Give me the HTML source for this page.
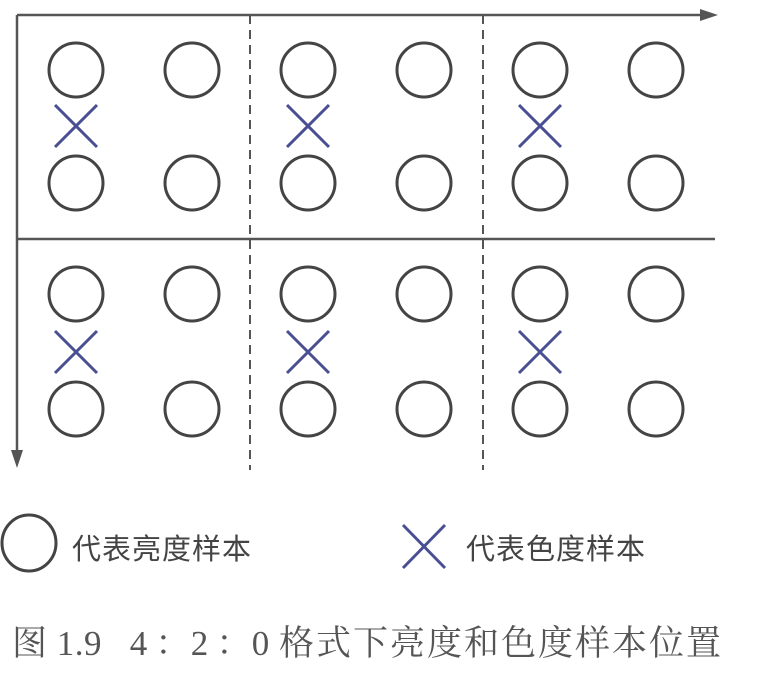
<!DOCTYPE html>
<html><head><meta charset="utf-8"><style>
html,body{margin:0;padding:0;background:#fff;}
body{width:768px;height:673px;overflow:hidden;position:relative;}
.t{position:absolute;font-family:"Liberation Serif","Noto Serif CJK SC",serif;color:#444;white-space:nowrap;}
</style></head><body>
<svg width="768" height="673" style="position:absolute;left:0;top:0">
<g stroke="#555" stroke-width="2.5" fill="none">
<line x1="17" y1="15" x2="705" y2="15"/>
<line x1="17" y1="15" x2="17" y2="455"/>
<line x1="17" y1="239" x2="715" y2="239"/>
<line x1="250" y1="15" x2="250" y2="470" stroke-dasharray="9,6" stroke-width="2"/>
<line x1="483" y1="15" x2="483" y2="470" stroke-dasharray="9,6" stroke-width="2"/>
</g>
<polygon points="718,15 700,9 700,21" fill="#555"/>
<polygon points="17,468 11,450 23,450" fill="#555"/>
<g stroke="#444" stroke-width="3" fill="none">
<circle cx="76" cy="70" r="27"/><circle cx="192" cy="70" r="27"/><circle cx="308" cy="70" r="27"/><circle cx="424" cy="70" r="27"/><circle cx="540" cy="70" r="27"/><circle cx="656" cy="70" r="27"/>
<circle cx="76" cy="183" r="27"/><circle cx="192" cy="183" r="27"/><circle cx="308" cy="183" r="27"/><circle cx="424" cy="183" r="27"/><circle cx="540" cy="183" r="27"/><circle cx="656" cy="183" r="27"/>
<circle cx="76" cy="294" r="27"/><circle cx="192" cy="294" r="27"/><circle cx="308" cy="294" r="27"/><circle cx="424" cy="294" r="27"/><circle cx="540" cy="294" r="27"/><circle cx="656" cy="294" r="27"/>
<circle cx="76" cy="409" r="27"/><circle cx="192" cy="409" r="27"/><circle cx="308" cy="409" r="27"/><circle cx="424" cy="409" r="27"/><circle cx="540" cy="409" r="27"/><circle cx="656" cy="409" r="27"/>
<ellipse cx="29" cy="543" rx="27" ry="28"/>
</g>
<g stroke="#4a4f94" stroke-width="3">
<path d="M55 105 L97 147 M97 105 L55 147"/>
<path d="M287 105 L329 147 M329 105 L287 147"/>
<path d="M519 105 L561 147 M561 105 L519 147"/>
<path d="M55 331 L97 373 M97 331 L55 373"/>
<path d="M287 331 L329 373 M329 331 L287 373"/>
<path d="M519 331 L561 373 M561 331 L519 373"/>
<path d="M403 525 L445 568 M445 525 L403 568"/>
</g>
</svg>
<div class="t" style="left:72px;top:526px;font-size:29px;letter-spacing:1px;font-family:'Liberation Sans','Noto Sans CJK SC',sans-serif;">代表亮度样本</div>
<div class="t" style="left:466px;top:526px;font-size:29px;letter-spacing:1px;font-family:'Liberation Sans','Noto Sans CJK SC',sans-serif;">代表色度样本</div>
<div class="t" style="left:12px;top:616px;font-size:35px;color:#555;letter-spacing:0.5px;">图 1.9 &nbsp; 4&thinsp;：2&thinsp;：0 <span style="letter-spacing:2px">格式下亮度和色度样本位置</span></div>
</body></html>
